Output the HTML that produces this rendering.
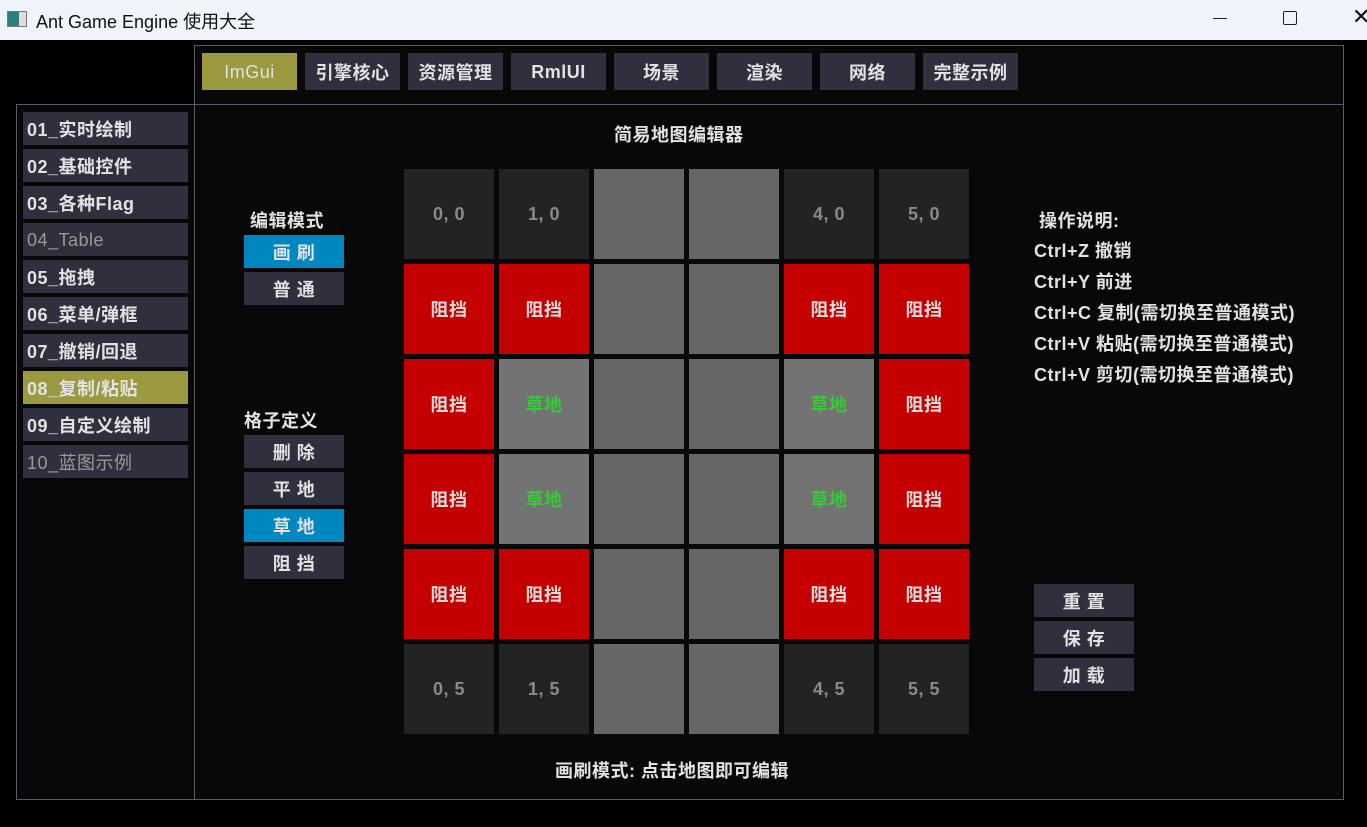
<!DOCTYPE html>
<html><head><meta charset="utf-8"><style>
*{margin:0;padding:0;box-sizing:border-box}
body{width:1367px;height:827px;background:#000;position:relative;overflow:hidden;font-family:"Liberation Sans","Noto Sans CJK SC",sans-serif;font-weight:bold;color:#e2e2e2;font-size:18px;letter-spacing:0.5px}
.a{position:absolute}
.tb{left:0;top:0;width:1367px;height:40px;background:#eef4fa;color:#111;font-weight:normal;letter-spacing:0}
.panel{border:1px solid #5e5c6b;background:#080808}
.btn{position:absolute;background:#302f3e;display:flex;align-items:center;justify-content:center;height:33px;padding-top:1px}
.lb{left:23px;width:165px;justify-content:flex-start;padding-left:4px}
.c{position:absolute;width:90px;height:90px;display:flex;align-items:center;justify-content:center;font-size:18px}
.d{background:#232323;color:#8a8a8a}
.r{background:#c40000;color:#ddd}
.g{background:#666}
.gr{background:#737373;color:#33cc33}
.t{position:absolute;white-space:nowrap}
</style></head><body>
<div class="a tb">
 <div class="a" style="left:7px;top:11px;width:20px;height:16px;border:1px solid #777;background:linear-gradient(90deg,#2a7f7f 60%,#ddd 60%)"></div>
 <div class="t" style="left:36px;top:8px;font-size:18px">Ant Game Engine 使用大全</div>
 <div class="a" style="left:1213px;top:18px;width:14px;height:1px;background:#222"></div>
 <div class="a" style="left:1283px;top:11px;width:14px;height:14px;border:1.5px solid #222;border-radius:2px"></div>
 <div class="t" style="left:1352px;top:4px;font-size:22px;font-weight:normal">✕</div>
</div>
<div class="a panel" style="left:194px;top:45px;width:1150px;height:60px"></div>
<div class="a panel" style="left:16px;top:104px;width:179px;height:696px"></div>
<div class="a panel" style="left:194px;top:104px;width:1150px;height:696px"></div>

<div class="btn" style="left:202px;top:53px;width:95px;height:37px;background:#9c9a40;font-weight:normal">ImGui</div>
<div class="btn" style="left:305px;top:53px;width:95px;height:37px">引擎核心</div>
<div class="btn" style="left:408px;top:53px;width:95px;height:37px">资源管理</div>
<div class="btn" style="left:511px;top:53px;width:95px;height:37px">RmlUI</div>
<div class="btn" style="left:614px;top:53px;width:95px;height:37px">场景</div>
<div class="btn" style="left:717px;top:53px;width:95px;height:37px">渲染</div>
<div class="btn" style="left:820px;top:53px;width:95px;height:37px">网络</div>
<div class="btn" style="left:923px;top:53px;width:95px;height:37px">完整示例</div>

<div class="btn lb" style="top:112px">01_实时绘制</div>
<div class="btn lb" style="top:149px">02_基础控件</div>
<div class="btn lb" style="top:186px">03_各种Flag</div>
<div class="btn lb" style="top:223px;color:#999;font-weight:normal">04_Table</div>
<div class="btn lb" style="top:260px">05_拖拽</div>
<div class="btn lb" style="top:297px">06_菜单/弹框</div>
<div class="btn lb" style="top:334px">07_撤销/回退</div>
<div class="btn lb" style="top:371px;background:#9c9a40">08_复制/粘贴</div>
<div class="btn lb" style="top:408px">09_自定义绘制</div>
<div class="btn lb" style="top:445px;color:#999;font-weight:normal">10_蓝图示例</div>

<div class="t" style="left:614px;top:121px">简易地图编辑器</div>
<div class="t" style="left:250px;top:207px">编辑模式</div>
<div class="btn" style="left:244px;top:235px;width:100px;background:#0087bf">画 刷</div>
<div class="btn" style="left:244px;top:272px;width:100px">普 通</div>
<div class="t" style="left:244px;top:407px">格子定义</div>
<div class="btn" style="left:244px;top:435px;width:100px">删 除</div>
<div class="btn" style="left:244px;top:472px;width:100px">平 地</div>
<div class="btn" style="left:244px;top:509px;width:100px;background:#0087bf">草 地</div>
<div class="btn" style="left:244px;top:546px;width:100px">阻 挡</div>

<div class="t" style="left:1039px;top:207px">操作说明:</div>
<div class="t" style="left:1034px;top:237px">Ctrl+Z 撤销</div>
<div class="t" style="left:1034px;top:268px">Ctrl+Y 前进</div>
<div class="t" style="left:1034px;top:299px">Ctrl+C 复制(需切换至普通模式)</div>
<div class="t" style="left:1034px;top:330px">Ctrl+V 粘贴(需切换至普通模式)</div>
<div class="t" style="left:1034px;top:361px">Ctrl+V 剪切(需切换至普通模式)</div>

<div class="btn" style="left:1034px;top:584px;width:100px">重 置</div>
<div class="btn" style="left:1034px;top:621px;width:100px">保 存</div>
<div class="btn" style="left:1034px;top:658px;width:100px">加 载</div>

<div class="t" style="left:555px;top:757px">画刷模式: 点击地图即可编辑</div>

<div id="grid"></div>
<script>
var m=[["d0, 0","d1, 0","g","g","d4, 0","d5, 0"],
["r阻挡","r阻挡","g","g","r阻挡","r阻挡"],
["r阻挡","x草地","g","g","x草地","r阻挡"],
["r阻挡","x草地","g","g","x草地","r阻挡"],
["r阻挡","r阻挡","g","g","r阻挡","r阻挡"],
["d0, 5","d1, 5","g","g","d4, 5","d5, 5"]];
var h="";
for(var y=0;y<6;y++)for(var x=0;x<6;x++){var s=m[y][x],k=s[0],t=s.slice(1);
h+='<div class="c '+(k=="x"?"gr":k)+'" style="left:'+(404+95*x)+'px;top:'+(169+95*y)+'px">'+t+'</div>';}
document.getElementById("grid").innerHTML=h;
</script>
</body></html>
